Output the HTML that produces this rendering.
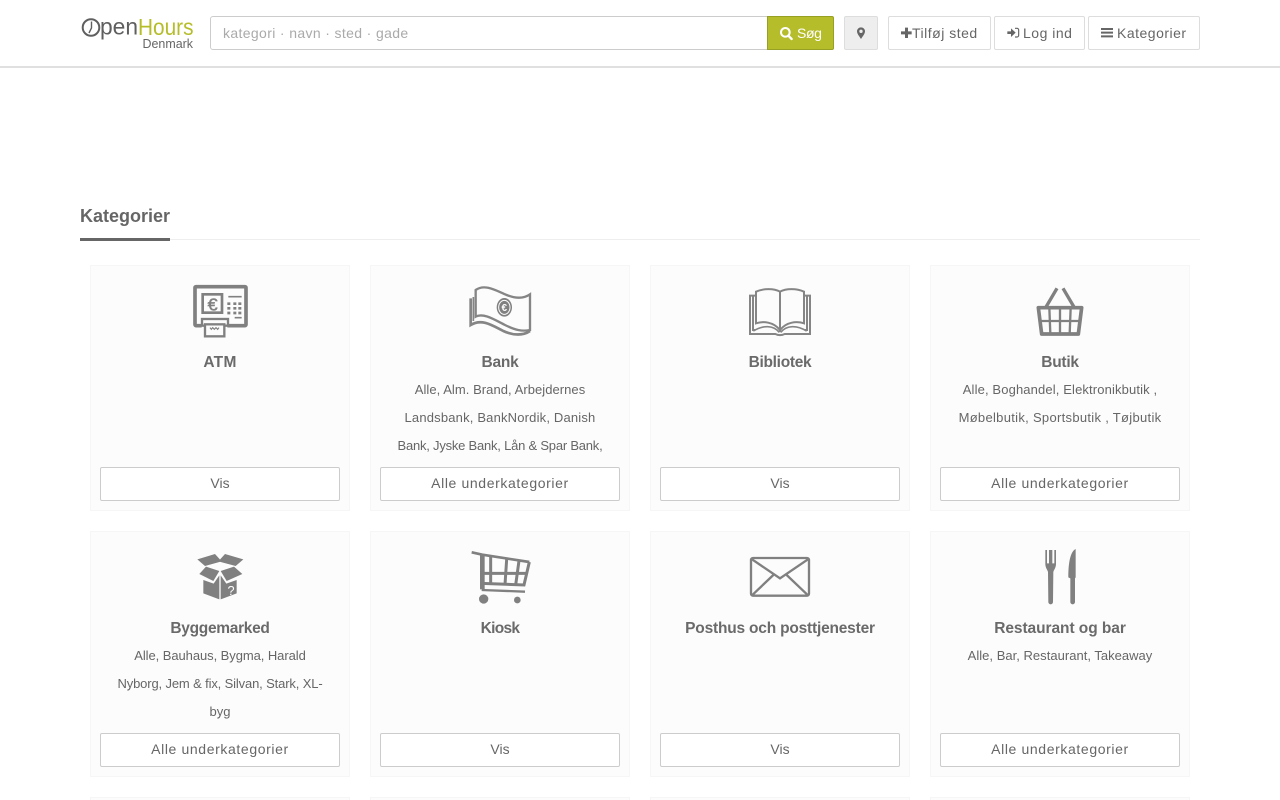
<!DOCTYPE html>
<html lang="da"><head><meta charset="utf-8"><title>OpenHours Denmark</title>
<style>
html,body{margin:0;padding:0;width:1280px;height:800px;overflow:hidden;background:#fff;font-family:"Liberation Sans",sans-serif;color:#666}
*{box-sizing:border-box}
#w{position:relative;width:1280px;height:800px;overflow:hidden;background:#fff}
.a{position:absolute}
header{position:absolute;left:0;top:0;width:1280px;height:68px;background:#fff;border-bottom:2px solid #e0e0e0}
.box{position:absolute;top:16px;height:34px;background:#fff;border:1px solid #ddd;border-radius:2px}
.t{position:absolute;top:16px;line-height:34px;font-size:14px;letter-spacing:.5px;white-space:nowrap}
h2{position:absolute;left:80px;top:204px;margin:0;font-size:18px;line-height:24px;font-weight:bold;letter-spacing:0;color:#666}
.card{position:absolute;width:260px;height:246px;background:#fcfcfc;border:1px solid #f6f6f6;text-align:center}
.card.s{height:3px;border-bottom:0}
.card b{position:absolute;left:0;right:0;top:87px;font-size:15.5px;line-height:20px;letter-spacing:-.25px;color:#6a6a6a}
.card p{position:absolute;left:0;right:0;top:110px;margin:0;font-size:13px;line-height:28px;color:#666;white-space:nowrap}
.card p span{display:block}
.card a{position:absolute;left:9px;top:201px;width:240px;height:34px;line-height:31px;background:#fff;border:1px solid #ccc;border-radius:2px;font-size:14px;letter-spacing:.62px;color:#666}
.card a.v{letter-spacing:0}
svg{position:absolute;left:0;top:0;pointer-events:none}
</style></head><body><div id="w">
<header>
<div class="box" style="left:210px;width:558px;border-color:#ccc;border-radius:3px 0 0 3px"></div>
<div class="t" style="left:223px;color:#aaa;letter-spacing:.36px">kategori · navn · sted · gade</div>
<div class="box" style="left:767px;width:67px;background:#b5bd2a;border-color:#98a024;border-radius:0 2px 2px 0"></div>
<div class="t" style="left:797px;color:#fff;letter-spacing:-.4px">Søg</div>
<div class="box" style="left:844px;width:34px;background:#eee"></div>
<div class="box" style="left:888px;width:103px"></div><div class="t" style="left:912px">Tilføj sted</div>
<div class="box" style="left:994px;width:91px"></div><div class="t" style="left:1023px">Log ind</div>
<div class="box" style="left:1088px;width:112px"></div><div class="t" style="left:1117px">Kategorier</div>
</header>
<h2>Kategorier</h2>
<div class="a" style="left:80px;top:239px;width:1120px;height:1px;background:#eee"></div>
<div class="a" style="left:80px;top:238px;width:90px;height:3px;background:#666"></div>

<div class="card" style="left:90px;top:265px"><b style="letter-spacing:.3px">ATM</b><a class="v">Vis</a></div>
<div class="card" style="left:370px;top:265px"><b>Bank</b><p><span style="letter-spacing:.05px">Alle, Alm. Brand, Arbejdernes</span><span style="letter-spacing:.18px">Landsbank, BankNordik, Danish</span><span style="letter-spacing:-.22px">Bank, Jyske Bank, Lån &amp; Spar Bank,</span></p><a>Alle underkategorier</a></div>
<div class="card" style="left:650px;top:265px"><b style="letter-spacing:-.3px">Bibliotek</b><a class="v">Vis</a></div>
<div class="card" style="left:930px;top:265px"><b>Butik</b><p><span style="letter-spacing:.13px">Alle, Boghandel, Elektronikbutik ,</span><span style="letter-spacing:.3px">Møbelbutik, Sportsbutik , Tøjbutik</span></p><a>Alle underkategorier</a></div>
<div class="card" style="left:90px;top:531px"><b style="letter-spacing:-.3px">Byggemarked</b><p><span style="letter-spacing:-.07px">Alle, Bauhaus, Bygma, Harald</span><span style="letter-spacing:-.14px">Nyborg, Jem &amp; fix, Silvan, Stark, XL-</span><span>byg</span></p><a>Alle underkategorier</a></div>
<div class="card" style="left:370px;top:531px"><b style="letter-spacing:-.7px">Kiosk</b><a class="v">Vis</a></div>
<div class="card" style="left:650px;top:531px"><b style="letter-spacing:-.2px">Posthus och posttjenester</b><a class="v">Vis</a></div>
<div class="card" style="left:930px;top:531px"><b style="letter-spacing:-.06px">Restaurant og bar</b><p><span style="letter-spacing:.02px">Alle, Bar, Restaurant, Takeaway</span></p><a>Alle underkategorier</a></div>
<div class="card s" style="left:90px;top:797px"></div><div class="card s" style="left:370px;top:797px"></div><div class="card s" style="left:650px;top:797px"></div><div class="card s" style="left:930px;top:797px"></div>

<svg width="1280" height="800" viewBox="0 0 1280 800" font-family="Liberation Sans, sans-serif">
<!-- logo -->
<circle cx="91" cy="27.5" r="8.3" fill="none" stroke="#5f5f5f" stroke-width="2"/>
<path d="M91.5 21.5V28L89 33" fill="none" stroke="#5f5f5f" stroke-width="1.4"/>
<text x="100" y="34.5" font-size="23" fill="#5f5f5f" textLength="38" lengthAdjust="spacingAndGlyphs">pen</text>
<text x="138" y="35" font-size="23.5" fill="#b5bd2a" textLength="55.5" lengthAdjust="spacingAndGlyphs">Hours</text>
<text x="142.5" y="48" font-size="12.5" fill="#666" textLength="50.5" lengthAdjust="spacingAndGlyphs">Denmark</text>
<!-- header icons -->
<g transform="translate(750 0) scale(.33333)">
<circle cx="106" cy="97" r="13" fill="none" stroke="#fff" stroke-width="6"/><path d="M115 107L125 117" stroke="#fff" stroke-width="7" stroke-linecap="round"/>
<path fill-rule="evenodd" fill="#666" d="M333 82a12 12 0 0 1 12 12c0 7-7 15-12 23c-5-8-12-16-12-23a12 12 0 0 1 12-12zm0 7a5 5 0 1 0 0 10a5 5 0 0 0 0-10z"/>
<path fill="#666" d="M465 83h9v11h11v9h-11v11h-9v-11h-12v-9h12z"/>
<path fill="#666" d="M772 94h11v-9l14 13l-14 13v-9h-11z"/><path d="M795 85h6a5 5 0 0 1 5 5v16a5 5 0 0 1-5 5h-6" fill="none" stroke="#666" stroke-width="3.5"/>
<path fill="#666" d="M1053 84h36v6h-36zM1053 95h36v6h-36zM1053 106h36v6h-36z"/>
</g>
<!-- ATM -->
<g transform="translate(170 275) scale(.33333)" fill="none" stroke="#808080">
<path d="M95 152H78a3 3 0 0 1-3-3V38a3 3 0 0 1 3-3H225a3 3 0 0 1 3 3V149a3 3 0 0 1-3 3H172" stroke-width="11"/>
<rect x="98" y="58" width="58" height="55" stroke-width="8"/>
<text x="128" y="106" font-size="54" fill="#808080" stroke="#808080" stroke-width="1.5" text-anchor="middle">€</text>
<path d="M175 65H215M194 128H215" stroke-width="5"/>
<path d="M172 86h9M190 86h9M205 86h9M172 100h9M190 100h9M205 100h9M172 114h9M190 114h9M205 114h9" stroke-width="8"/>
<rect x="96" y="132" width="78" height="20" fill="#fcfcfc" stroke-width="7"/>
<rect x="105" y="148" width="58" height="36" fill="#fcfcfc" stroke-width="7"/>
<path d="M120 158l4 5 4-5 5 5 5-5 5 5 4-5" stroke-width="3.5"/>
</g>
<!-- Bank -->
<g transform="translate(450 275) scale(.33333)" fill="none" stroke="#858585">
<path d="M77 45C105 25 140 48 170 60C195 70 220 72 240 58V165C215 170 195 165 165 150C135 135 100 112 77 125Z" stroke-width="7"/>
<path d="M62 70V150C95 130 125 150 160 168C190 182 220 182 240 168" stroke-width="8"/>
<path d="M70 66V138" stroke-width="5"/>
<ellipse cx="163" cy="97" rx="23" ry="28" fill="#808080" stroke="none"/><ellipse cx="163" cy="97" rx="17" ry="21" stroke="#fcfcfc" stroke-width="3"/>
<text x="163" y="108" font-size="30" fill="#fcfcfc" stroke="none" text-anchor="middle" font-weight="bold">€</text>
</g>
<!-- Book -->
<g transform="translate(730 275) scale(.33333)" fill="none" stroke="#858585" stroke-width="6">
<path d="M78 62H60V177H136Q150 184 164 177H240V62H224"/>
<path d="M69 62V165H76M231 62V165H224"/>
<path d="M78 50C100 40 132 40 150 50V165C130 140 100 138 78 145Z"/>
<path d="M222 50C200 40 168 40 150 50V165C170 140 200 138 222 145Z"/>
<path d="M70 168C100 150 130 150 148 172M230 168C200 150 170 150 152 172" stroke-width="5"/>
</g>
<!-- Basket -->
<g transform="translate(1010 275) scale(.33333)" fill="none" stroke="#808080">
<path d="M141 40L108 96M159 40L192 96" stroke-width="10"/>
<path d="M85 98H215L205 177H95Z" stroke-width="11" stroke-linejoin="round"/>
<path d="M90 138H210M118 98L121 177M150 98V177M182 98L179 177" stroke-width="7"/>
</g>
<!-- Box -->
<g transform="translate(170 540) scale(.33333)" fill="#808080">
<path d="M82 58L135 42L155 64L105 78ZM165 42L220 58L197 78L145 64Z"/>
<path d="M108 80L148 93L130 123L88 102ZM192 80L152 93L170 123L217 102Z"/>
<path d="M100 120L131 131L148 106V178L100 160ZM152 106L169 131L200 120V160L152 178Z"/>
<text x="183" y="165" font-size="38" fill="#fcfcfc" text-anchor="middle">?</text>
</g>
<!-- Cart -->
<g transform="translate(450 540) scale(.33333)" fill="none" stroke="#808080">
<path d="M65 37L97 44L238 66" stroke-width="8"/>
<path d="M97 45V148" stroke-width="14"/>
<path d="M238 66L222 135L95 130" stroke-width="9"/>
<path d="M95 100L230 100M122 50V132M170 58L165 134M207 62L197 135" stroke-width="9"/>
<path d="M95 150L225 155" stroke-width="7"/>
<circle cx="101" cy="177" r="14" fill="#808080" stroke="none"/><circle cx="202" cy="180" r="10" fill="#808080" stroke="none"/>
</g>
<!-- Envelope -->
<g transform="translate(730 540) scale(.33333)" fill="none" stroke="#808080" stroke-width="7">
<rect x="63" y="54" width="174" height="113" rx="6"/>
<path d="M66 58L150 115L234 58M68 164L130 105M232 164L170 105"/>
</g>
<!-- Cutlery -->
<g transform="translate(1010 540) scale(.33333)" fill="#808080">
<path d="M106 30h5v40h6V30h10v40h6V30h5V72C138 84 131 90 130 96L129 186a7 7 0 0 1-14 0L114 96C113 90 106 84 106 72Z"/>
<path d="M197 27C180 35 175 72 175 112L181 115V186a7 7 0 0 0 14 0V115L197 112Z"/>
</g>
</svg>
</div></body></html>
